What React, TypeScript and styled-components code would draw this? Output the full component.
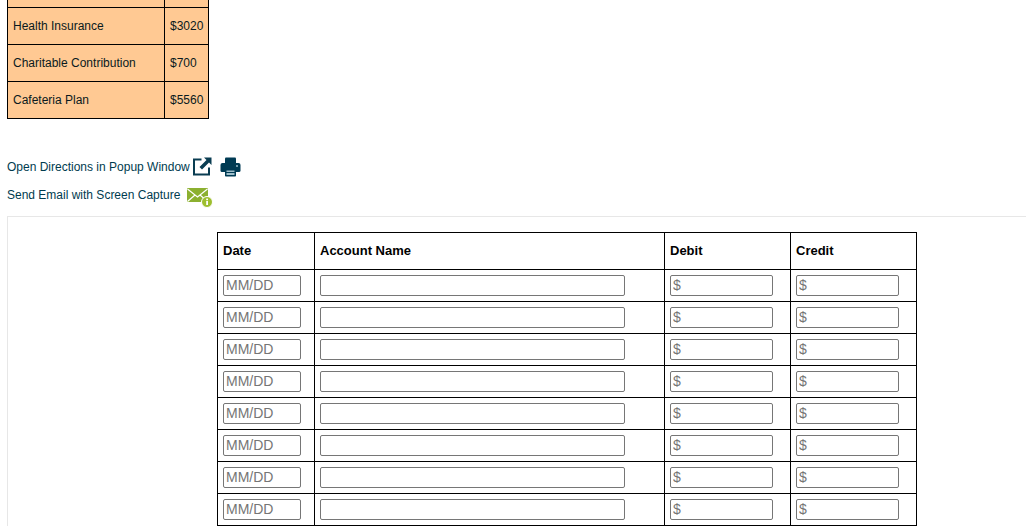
import styled, { createGlobalStyle } from "styled-components";

const deductions = [
  { name: "Health Insurance", amount: "$3020" },
  { name: "Charitable Contribution", amount: "$700" },
  { name: "Cafeteria Plan", amount: "$5560" },
];

const GlobalStyle = createGlobalStyle`
  html, body {
    margin: 0;
    padding: 0;
    background: #fff;
    overflow: hidden;
  }
  body {
    font-family: "Liberation Sans", Arial, sans-serif;
    font-size: 12px;
    color: #000;
  }
`;

const Page = styled.div`
  height: 526px;
  overflow: hidden;
  padding-left: 7px;
`;

const DeductionTable = styled.table`
  border-collapse: collapse;
  width: 201px;
  table-layout: fixed;
  background: #ffc993;

  td {
    border: 1px solid #000;
    padding: 0 5px;
    height: 36px;
    color: #0a1a20;
    font-size: 12px;
    box-sizing: content-box;
  }
`;

const StubRow = styled.tr`
  td {
    height: 7px;
    padding: 0;
    border-top: 0;
  }
`;

const LinkRow = styled.div<{ $top: number }>`
  display: flex;
  align-items: center;
  height: 20px;
  margin-top: ${(p) => p.$top}px;
  color: #003b4f;
  font-size: 12px;
`;

const PopupIcon = styled.svg`
  margin-left: 2px;
  flex: none;
`;

const PrintIcon = styled.svg`
  margin-left: 8px;
  flex: none;
`;

const MailIcon = styled.svg`
  margin-left: 7px;
  margin-top: 5px;
  flex: none;
`;

const Panel = styled.section`
  margin-top: 11px;
  border: 1px solid #e7e7e7;
  border-right: 0;
  padding: 15px 0 0 209px;
  box-sizing: border-box;
  height: 320px;
`;

const JournalTable = styled.table`
  border-collapse: collapse;
  table-layout: fixed;
  width: 699px;

  th,
  td {
    border: 1px solid #000;
    padding: 0 5px;
    text-align: left;
    box-sizing: border-box;
  }

  th {
    height: 37px;
    padding-bottom: 2px;
    font-size: 13px;
    font-weight: 700;
    color: #000;
  }

  td {
    height: 32px;
  }
`;

const Field = styled.input<{ $width: number }>`
  display: block;
  width: ${(p) => p.$width}px;
  height: 21px;
  box-sizing: border-box;
  border: 1px solid #767676;
  border-radius: 2px;
  padding: 0 2px 2px;
  margin: 0;
  font-family: "Liberation Sans", Arial, sans-serif;
  font-size: 14px;
  background: #fff;

  &::placeholder {
    color: #757575;
    opacity: 1;
  }
`;

const rows = Array.from({ length: 8 }, (_, i) => i);

export default function App() {
  return (
    <>
      <GlobalStyle />
      <Page>
        <DeductionTable>
          <colgroup>
            <col style={{ width: 157 }} />
            <col style={{ width: 44 }} />
          </colgroup>
          <tbody>
            <StubRow>
              <td />
              <td />
            </StubRow>
            {deductions.map((d) => (
              <tr key={d.name}>
                <td>{d.name}</td>
                <td>{d.amount}</td>
              </tr>
            ))}
          </tbody>
        </DeductionTable>

        <LinkRow $top={38}>
          Open Directions in Popup Window
          <PopupIcon width="20" height="20" viewBox="0 0 20 20">
            <path d="M9.5 2.5H2V17.5H17V10.5" fill="none" stroke="#0a3d52" strokeWidth="2" />
            <path d="M12 .5H19.5V8L17 5.5 10 12.5 7.5 10 14.5 3z" fill="#0a3d52" />
          </PopupIcon>
          <PrintIcon width="21" height="20" viewBox="0 0 21 20">
            <path d="M5 6V1.5Q5 .5 6 .5H15Q16 .5 16 1.5V6z" fill="#003b54" />
            <path d="M2.5 6H18.5Q20.5 6 20.5 8V13.5Q20.5 15 19 15H1.9Q.5 15 .5 13.5V8Q.5 6 2.5 6z" fill="#003b54" />
            <rect x="5" y="12.5" width="11" height="7" rx=".8" fill="#003b54" />
            <rect x="6.5" y="13.5" width="8" height="1.5" fill="#9fc0cc" />
            <rect x="6.5" y="16" width="8" height="2" fill="#9fc0cc" />
            <circle cx="17" cy="9" r="1" fill="#9fc0cc" />
          </PrintIcon>
        </LinkRow>
        <LinkRow $top={8}>
          Send Email with Screen Capture
          <MailIcon width="26" height="22" viewBox="0 0 26 22">
            <rect x="0" y="1" width="21" height="14" rx="1" fill="#8cb030" />
            <path d="M0.5 2 10.5 10 20.5 2M0.5 14.5 8 8M20.5 14.5 13 8" fill="none" stroke="#fff" strokeWidth="1.2" />
            <circle cx="20" cy="15" r="5.5" fill="#9dbe2e" stroke="#fff" strokeWidth="1" />
            <rect x="19.2" y="14" width="1.8" height="4" fill="#fff" />
            <rect x="19.2" y="11.6" width="1.8" height="1.6" fill="#fff" />
          </MailIcon>
        </LinkRow>

        <Panel>
          <JournalTable>
            <colgroup>
              <col style={{ width: 97 }} />
              <col style={{ width: 350 }} />
              <col style={{ width: 126 }} />
              <col style={{ width: 126 }} />
            </colgroup>
            <thead>
              <tr>
                <th>Date</th>
                <th>Account Name</th>
                <th>Debit</th>
                <th>Credit</th>
              </tr>
            </thead>
            <tbody>
              {rows.map((r) => (
                <tr key={r}>
                  <td>
                    <Field $width={78} placeholder="MM/DD" />
                  </td>
                  <td>
                    <Field $width={305} />
                  </td>
                  <td>
                    <Field $width={103} placeholder="$" />
                  </td>
                  <td>
                    <Field $width={103} placeholder="$" />
                  </td>
                </tr>
              ))}
            </tbody>
          </JournalTable>
        </Panel>
      </Page>
    </>
  );
}
